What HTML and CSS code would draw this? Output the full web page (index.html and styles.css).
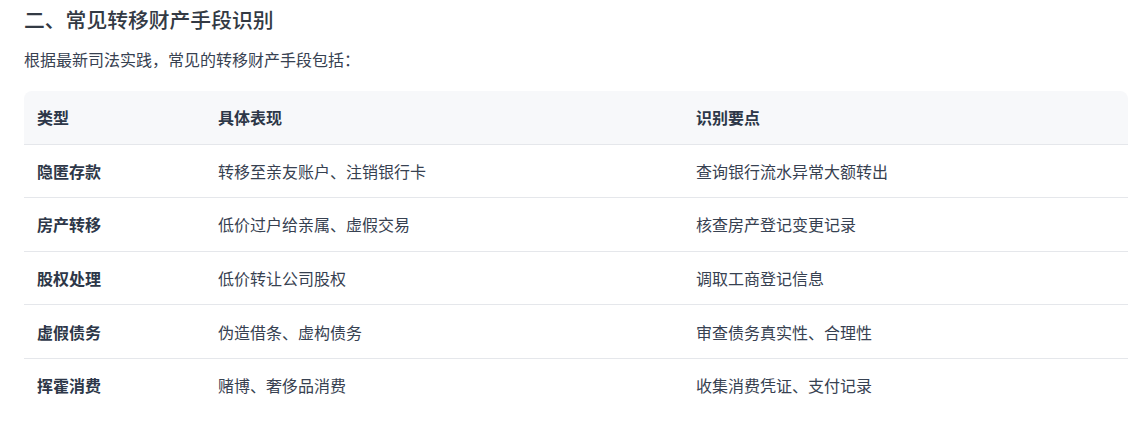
FILE: index.html
```html
<!DOCTYPE html>
<html lang="zh-CN">
<head>
<meta charset="utf-8">
<link rel="stylesheet" href="styles.css">
</head>
<body>
<div class="page">
  <h2 class="title">二、常见转移财产手段识别</h2>
  <p class="intro">根据最新司法实践，常见的转移财产手段包括：</p>
  <table class="grid">
    <colgroup>
      <col class="c1"><col class="c2"><col class="c3">
    </colgroup>
    <thead>
      <tr><th>类型</th><th>具体表现</th><th>识别要点</th></tr>
    </thead>
    <tbody>
      <tr><td class="kind">隐匿存款</td><td>转移至亲友账户、注销银行卡</td><td>查询银行流水异常大额转出</td></tr>
      <tr><td class="kind">房产转移</td><td>低价过户给亲属、虚假交易</td><td>核查房产登记变更记录</td></tr>
      <tr><td class="kind">股权处理</td><td>低价转让公司股权</td><td>调取工商登记信息</td></tr>
      <tr><td class="kind">虚假债务</td><td>伪造借条、虚构债务</td><td>审查债务真实性、合理性</td></tr>
      <tr><td class="kind">挥霍消费</td><td>赌博、奢侈品消费</td><td>收集消费凭证、支付记录</td></tr>
    </tbody>
  </table>
</div>
</body>
</html>
```
FILE: styles.css
```css
html, body {
  margin: 0;
  padding: 0;
  background: #ffffff;
}
body {
  font-family: "Noto Sans CJK SC", "Noto Sans", sans-serif;
  color: #374151;
}
.page {
  padding: 0 17px 0 24px;
}
.title {
  margin: 0;
  padding-top: 4px;
  font-size: 20.8px;
  line-height: 31px;
  font-weight: 500;
  color: #333a44;
}
.intro {
  margin: 12px 0 0;
  font-size: 16px;
  line-height: 24px;
  color: #374151;
}
.grid {
  margin-top: 20px;
  width: 100%;
  border-collapse: separate;
  border-spacing: 0;
  table-layout: fixed;
  font-size: 16px;
}
.c1 { width: 181px; }
.c2 { width: 478px; }
.grid th {
  background: #f7f8fa;
  text-align: left;
  font-weight: 700;
  color: #2d3748;
  padding: 14.3px 13px;
  line-height: 24px;
  border-bottom: 1px solid #e5e7eb;
}
.grid th:first-child { border-top-left-radius: 8px; }
.grid th:last-child { border-top-right-radius: 8px; }
.grid td {
  padding: 14.3px 13px;
  line-height: 24px;
  color: #374151;
  border-bottom: 1px solid #e5e7eb;
}
.grid tbody tr:last-child td { border-bottom: none; }
.grid td.kind {
  font-weight: 700;
  color: #2d3748;
}
```
